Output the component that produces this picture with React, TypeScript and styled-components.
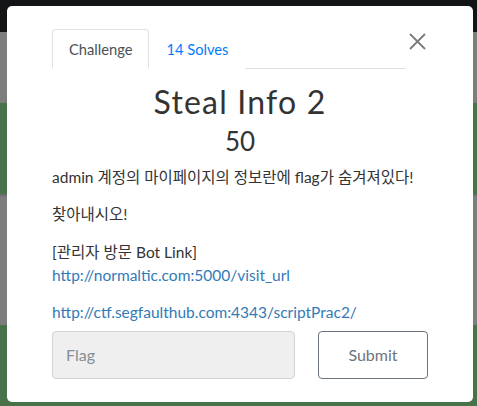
import React from 'react';
import styled, { createGlobalStyle } from 'styled-components';

const GlobalStyle = createGlobalStyle`
    html, body {
        margin: 0;
        padding: 0;
        width: 477px;
        height: 406px;
        overflow: hidden;
        font-family: Lato, "Noto Sans CJK KR", sans-serif;
    }
`;

const Page = styled.div`
    position: relative;
    width: 477px;
    height: 406px;
    display: flex;
    flex-direction: column;
`;

// the dimmed page that sits behind the modal
const Band = styled.div<{ $color: string; $height: number }>`
    height: ${props => props.$height}px;
    flex-shrink: 0;
    background: ${props => props.$color};
`;

const Modal = styled.div`
    position: absolute;
    left: 7px;
    top: 6px;
    width: 466px;
    height: 396px;
    box-sizing: border-box;
    padding: 23px 45px 0;
    background: #fff;
    border-radius: 5px;
    display: flex;
    flex-direction: column;
    color: #333;
`;

const Header = styled.div`
    display: flex;
    align-items: flex-start;
`;

const Tabs = styled.div`
    width: 354px;
    display: flex;
    border-bottom: 1px solid #dee2e6;
`;

const Tab = styled.div<{ $active?: boolean }>`
    padding: 7px 16px;
    margin-bottom: -1px;
    font-size: 14.7px;
    line-height: 24px;
    color: ${props => (props.$active ? '#495057' : '#007bff')};
    background: #fff;
    border: 1px solid ${props => (props.$active ? '#dee2e6' : 'transparent')};
    border-bottom-color: ${props => (props.$active ? '#fff' : 'transparent')};
    border-radius: 4px 4px 0 0;
`;

const Close = styled.button`
    flex: 1;
    height: 24px;
    padding: 0;
    border: none;
    background: none;
    display: flex;
    justify-content: center;
    align-items: center;
`;

const Title = styled.h2`
    margin: 14px 0 0;
    font-size: 32px;
    font-weight: 400;
    line-height: 1.2;
    letter-spacing: 1.2px;
    text-align: center;
    color: #333;
`;

const Value = styled.h3`
    margin: 5px 0 0;
    font-size: 26px;
    font-weight: 400;
    line-height: 1.2;
    text-align: center;
    color: #333;
`;

const Description = styled.div`
    margin-top: 8px;
    font-size: 15.5px;
    line-height: 23px;
`;

const Para = styled.p`
    margin: 0 0 14.5px;
`;

const Link = styled.a`
    color: #337ab7;
    text-decoration: none;
`;

const SubmitRow = styled.div`
    display: flex;
    gap: 23px;
    margin-top: -8px;
`;

const FlagInput = styled.input`
    width: 243px;
    height: 48px;
    box-sizing: border-box;
    padding: 0 13px;
    font-family: inherit;
    font-size: 16px;
    color: #333;
    background: #efefef;
    border: 1px solid #ced4da;
    border-radius: 4px;

    &::placeholder {
        color: #868e96;
    }
`;

const SubmitButton = styled.button`
    width: 110px;
    height: 48px;
    font-family: inherit;
    font-size: 16px;
    color: #6c757d;
    background: #fff;
    border: 1px solid #6c757d;
    border-radius: 4px;
`;

const bands = [
    { color: '#131416', height: 32 },
    { color: '#7d7d7d', height: 71 },
    { color: '#487249', height: 91 },
    { color: '#6c6c6c', height: 2 },
    { color: '#7d7d7d', height: 129 },
    { color: '#487249', height: 81 },
];

const App = () => (
    <Page>
        <GlobalStyle />
        {bands.map((band, i) => (
            <Band key={i} $color={band.color} $height={band.height} />
        ))}
        <Modal>
            <Header>
                <Tabs>
                    <Tab $active>Challenge</Tab>
                    <Tab>14 Solves</Tab>
                </Tabs>
                <Close aria-label="Close">
                    <svg width="17" height="17" viewBox="0 0 17 17">
                        <path d="M1 1L16 16M16 1L1 16" stroke="#7b7b7b" strokeWidth="1.8" />
                    </svg>
                </Close>
            </Header>
            <Title>Steal Info 2</Title>
            <Value>50</Value>
            <Description>
                <Para>admin 계정의 마이페이지의 정보란에 flag가 숨겨져있다!</Para>
                <Para>찾아내시오!</Para>
                <Para>
                    [관리자 방문 Bot Link]
                    <br />
                    <Link href="#">http://normaltic.com:5000/visit_url</Link>
                </Para>
                <Para>
                    <Link href="#">http://ctf.segfaulthub.com:4343/scriptPrac2/</Link>
                </Para>
            </Description>
            <SubmitRow>
                <FlagInput placeholder="Flag" />
                <SubmitButton>Submit</SubmitButton>
            </SubmitRow>
        </Modal>
    </Page>
);

export default App;
